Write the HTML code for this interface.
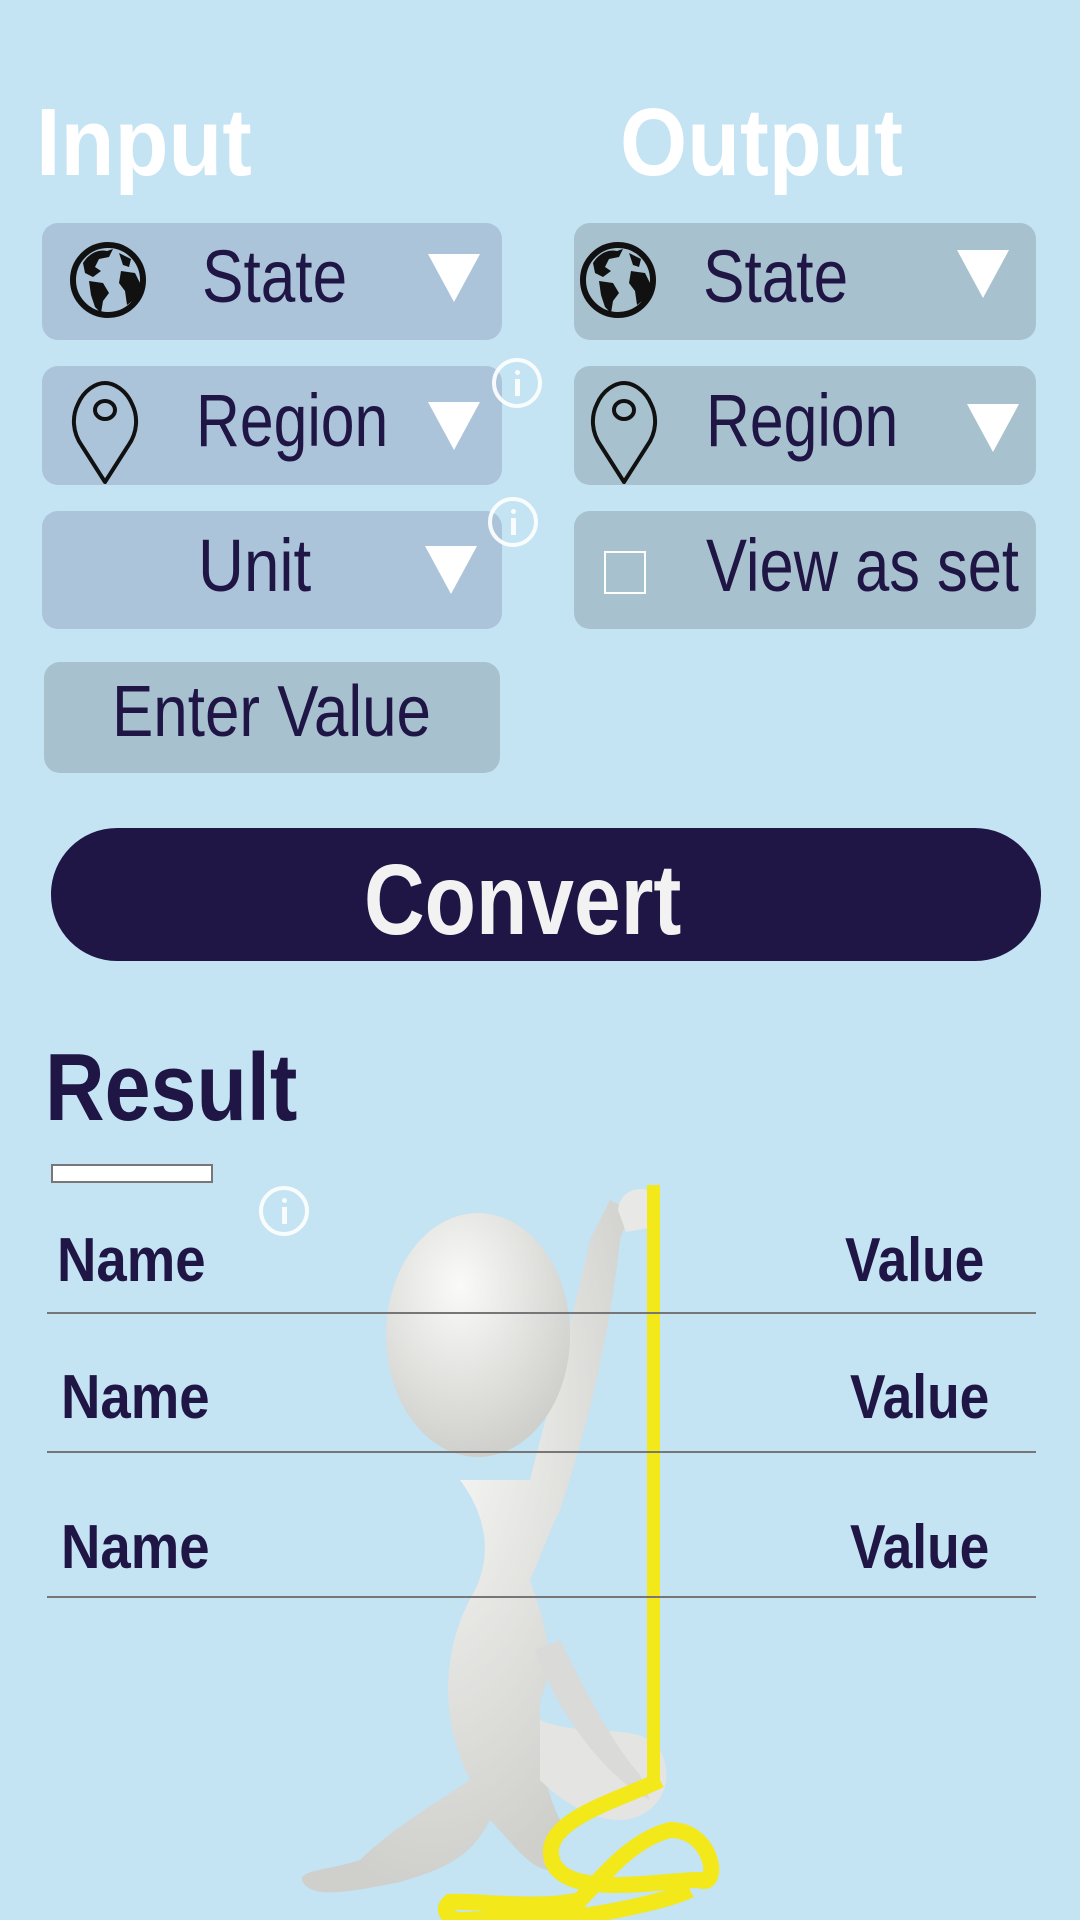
<!DOCTYPE html>
<html><head><meta charset="utf-8"><style>
*{margin:0;padding:0;box-sizing:border-box}
body{width:1080px;height:1920px;background:#c4e3f3;position:relative;overflow:hidden;font-family:"Liberation Sans",sans-serif;color:#1f1646}
.a{position:absolute}
.t{position:absolute;white-space:nowrap;line-height:1;transform-origin:0 0}
.box{position:absolute;border-radius:16px;background:#abc4d9}
.ob{background:#a8c1cf}
.tri{position:absolute;width:0;height:0;border-left:26px solid transparent;border-right:26px solid transparent;border-top:48px solid #fff}
.info{position:absolute;width:50px;height:50px;border:4px solid #fff;border-radius:50%;opacity:.9}
.info:before{content:"";position:absolute;left:19px;top:8px;width:5px;height:5px;background:#fff;border-radius:50%}
.info:after{content:"";position:absolute;left:19px;top:17px;width:5px;height:17px;background:#fff}
.line{position:absolute;left:47px;width:989px;height:2px;background:#767676}
.b{font-weight:bold}
</style></head><body>
<div class="t b" style="left:36px;top:95px;font-size:96px;color:#fff;transform:scaleX(.92)">Input</div>
<div class="t b" style="left:620px;top:95px;font-size:96px;color:#fff;transform:scaleX(.9)">Output</div>

<div class="box" style="left:42px;top:223px;width:460px;height:117px"></div>
<div class="box" style="left:42px;top:366px;width:460px;height:119px"></div>
<div class="box" style="left:42px;top:511px;width:460px;height:118px"></div>
<div class="box ob" style="left:44px;top:662px;width:456px;height:111px"></div>
<div class="box ob" style="left:574px;top:223px;width:462px;height:117px"></div>
<div class="box ob" style="left:574px;top:366px;width:462px;height:119px"></div>
<div class="box ob" style="left:574px;top:511px;width:462px;height:118px"></div>

<svg class="a" style="left:69px;top:241px" width="78" height="78" viewBox="0 0 78 78"><circle cx="39" cy="39" r="35" fill="#abc4d9" stroke="#111" stroke-width="6"/><path d="M14 22 C20 12 30 8 38 10 L44 8 L40 16 L30 18 L26 26 L32 30 L24 36 L16 32 Z M20 40 L34 42 L40 52 L34 60 L32 72 L26 66 L22 54 Z M50 12 L62 18 L60 26 L54 24 Z M52 30 L66 32 L72 44 L66 58 L58 64 L56 50 L50 42 Z" fill="#111"/></svg>
<svg class="a" style="left:579px;top:241px" width="78" height="78" viewBox="0 0 78 78"><circle cx="39" cy="39" r="35" fill="#a8c1cf" stroke="#111" stroke-width="6"/><path d="M14 22 C20 12 30 8 38 10 L44 8 L40 16 L30 18 L26 26 L32 30 L24 36 L16 32 Z M20 40 L34 42 L40 52 L34 60 L32 72 L26 66 L22 54 Z M50 12 L62 18 L60 26 L54 24 Z M52 30 L66 32 L72 44 L66 58 L58 64 L56 50 L50 42 Z" fill="#111"/></svg>
<svg class="a" style="left:70px;top:380px" width="70" height="104" viewBox="0 0 70 104"><path d="M35 102 L12 66 C2 52 2 36 8 24 C14 10 26 3 35 3 C44 3 56 10 62 24 C68 36 68 52 58 66 Z" fill="none" stroke="#111" stroke-width="4" stroke-linejoin="round"/><ellipse cx="35" cy="30" rx="10" ry="9" fill="none" stroke="#111" stroke-width="4"/></svg>
<svg class="a" style="left:589px;top:380px" width="70" height="104" viewBox="0 0 70 104"><path d="M35 102 L12 66 C2 52 2 36 8 24 C14 10 26 3 35 3 C44 3 56 10 62 24 C68 36 68 52 58 66 Z" fill="none" stroke="#111" stroke-width="4" stroke-linejoin="round"/><ellipse cx="35" cy="30" rx="10" ry="9" fill="none" stroke="#111" stroke-width="4"/></svg>
<div class="a" style="left:604px;top:551px;width:42px;height:43px;border:2px solid #fff"></div>

<div class="t" style="left:202px;top:240px;font-size:74px;transform:scaleX(.84)">State</div>
<div class="t" style="left:196px;top:384px;font-size:74px;transform:scaleX(.82)">Region</div>
<div class="t" style="left:198px;top:529px;font-size:74px;transform:scaleX(.86)">Unit</div>
<div class="t" style="left:112px;top:676px;font-size:72px;transform:scaleX(.86)">Enter Value</div>
<div class="t" style="left:703px;top:240px;font-size:74px;transform:scaleX(.84)">State</div>
<div class="t" style="left:706px;top:384px;font-size:74px;transform:scaleX(.82)">Region</div>
<div class="t" style="left:706px;top:529px;font-size:74px;transform:scaleX(.83)">View as set</div>

<div class="tri" style="left:428px;top:254px"></div>
<div class="tri" style="left:428px;top:402px"></div>
<div class="tri" style="left:425px;top:546px"></div>
<div class="tri" style="left:957px;top:250px"></div>
<div class="tri" style="left:967px;top:404px"></div>

<div class="info" style="left:492px;top:358px"></div>
<div class="info" style="left:488px;top:497px"></div>

<div class="a" style="left:51px;top:828px;width:990px;height:133px;border-radius:66px;background:#1f1646"></div>
<div class="t b" style="left:364px;top:850px;font-size:100px;color:#f2f2f2;transform:scaleX(.84)">Convert</div>

<div class="t b" style="left:45px;top:1040px;font-size:96px;transform:scaleX(.86)">Result</div>
<div class="a" style="left:51px;top:1164px;width:162px;height:19px;background:#fff;border:2px solid #777"></div>

<svg class="a" style="left:290px;top:1180px" width="440" height="740" viewBox="0 0 440 740">
<defs><radialGradient id="g" cx="40%" cy="30%" r="70%"><stop offset="0" stop-color="#fafaf8"/><stop offset="1" stop-color="#cfcfcc"/></radialGradient></defs>
<path d="M170 300 C200 340 200 380 185 410 C150 470 150 540 180 600 C150 620 100 650 70 680 C40 690 10 690 12 700 C20 720 60 712 110 702 C150 690 180 680 200 640 C220 660 240 690 260 690 L270 640 C250 600 250 560 250 520 C270 480 250 430 240 400 C250 380 255 360 270 330 C300 240 320 150 330 60 L340 30 L320 20 L300 60 C280 150 255 240 240 300 Z" fill="url(#g)"/>
<path d="M250 540 C300 560 350 540 370 570 C390 610 360 640 330 640 C300 640 270 620 250 600 Z" fill="#e4e4e2"/>
<path d="M245 470 C270 540 320 600 360 620 L350 595 C320 560 295 510 270 460 Z" fill="#dadad8"/>
<ellipse cx="188" cy="155" rx="92" ry="122" fill="url(#g)"/>
<path d="M328 30 C330 10 350 5 362 12 C372 20 370 40 360 48 L336 52 Z" fill="#e8e8e6"/>
<rect x="357" y="5" width="13" height="600" fill="#f2e81a"/>
<path d="M370 600 C330 620 250 640 262 680 C275 720 370 700 410 700 C430 710 425 650 380 650 C340 660 310 700 290 720 C250 730 180 720 160 722 C150 730 160 740 170 740 L300 735 C330 730 380 720 400 710" fill="none" stroke="#f2e81a" stroke-width="16"/>
</svg>

<div class="info" style="left:259px;top:1186px"></div>

<div class="t b" style="left:57px;top:1230px;font-size:62px;transform:scaleX(.88)">Name</div>
<div class="t b" style="left:845px;top:1230px;font-size:62px;transform:scaleX(.86)">Value</div>
<div class="line" style="top:1312px"></div>
<div class="t b" style="left:61px;top:1367px;font-size:62px;transform:scaleX(.88)">Name</div>
<div class="t b" style="left:850px;top:1367px;font-size:62px;transform:scaleX(.86)">Value</div>
<div class="line" style="top:1451px"></div>
<div class="t b" style="left:61px;top:1517px;font-size:62px;transform:scaleX(.88)">Name</div>
<div class="t b" style="left:850px;top:1517px;font-size:62px;transform:scaleX(.86)">Value</div>
<div class="line" style="top:1596px"></div>
</body></html>
